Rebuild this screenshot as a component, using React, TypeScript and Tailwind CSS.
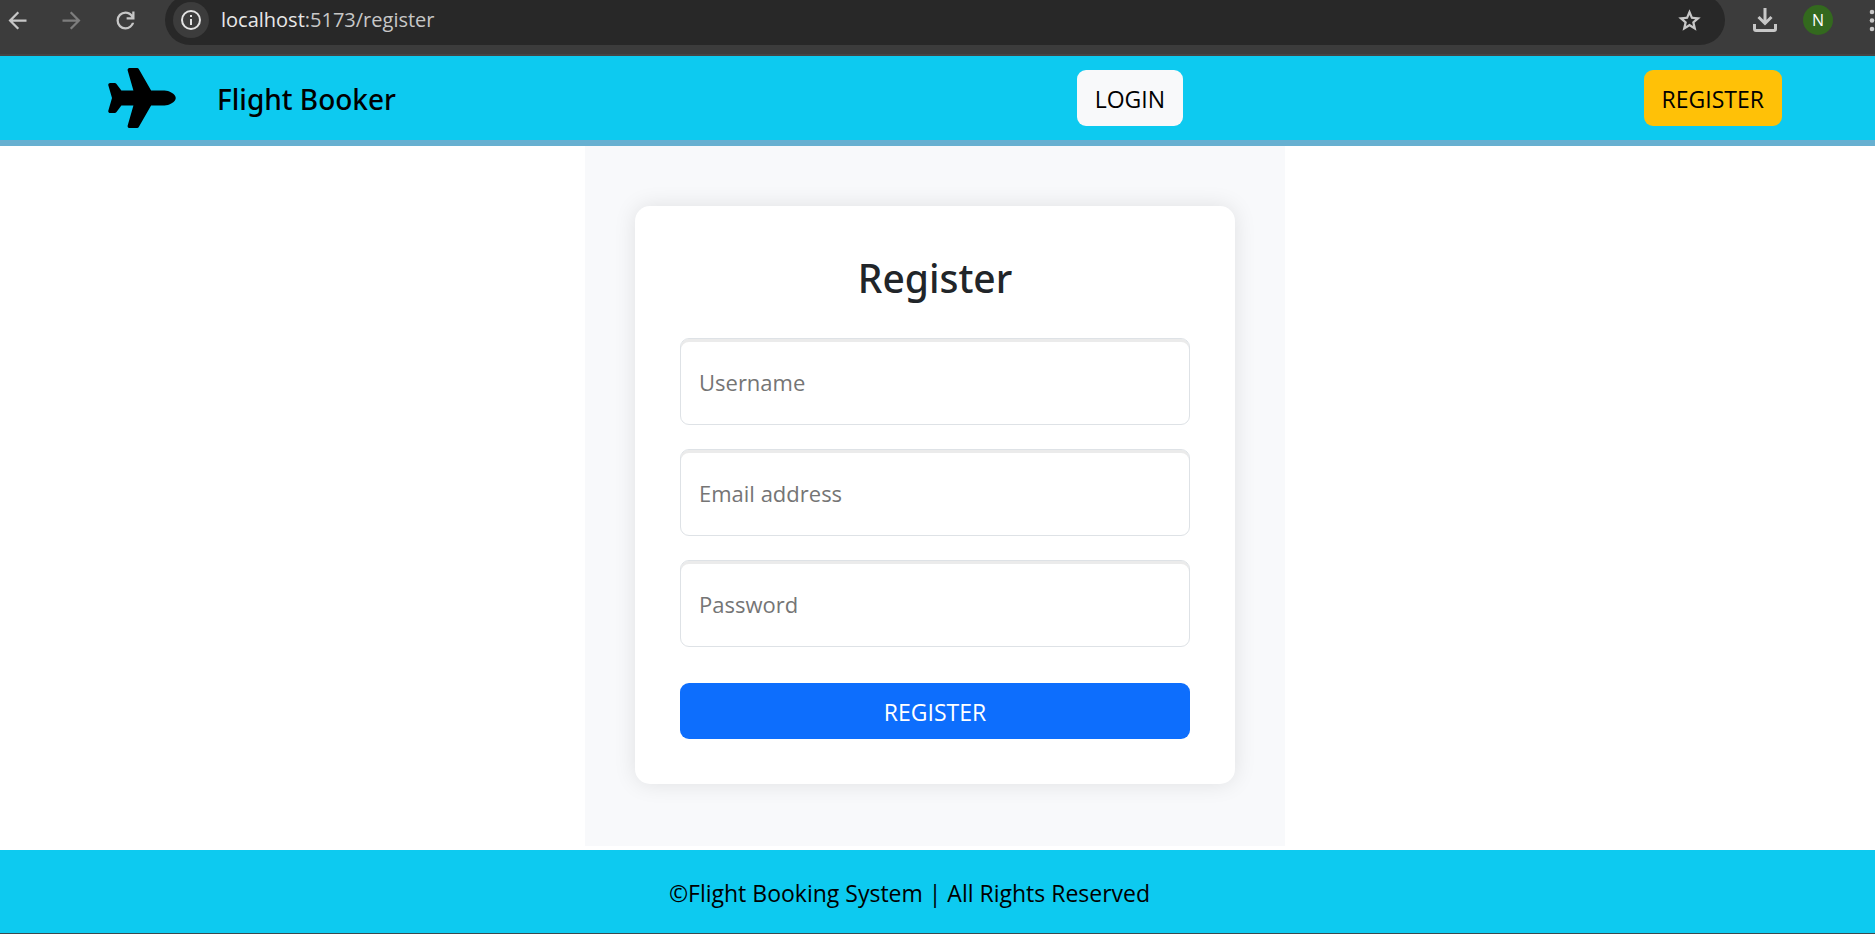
import React from "react";
import { FaPlane } from "react-icons/fa";

const paths = {
  back: "m313-440 224 224-57 56-320-320 320-320 57 56-224 224h487v80H313Z",
  reload:
    "M480-160q-134 0-227-93t-93-227q0-134 93-227t227-93q69 0 132 28.5T720-690v-110h80v280H520v-80h168q-32-56-87.5-88T480-720q-100 0-170 70t-70 170q0 100 70 170t170 70q77 0 139-44t87-116h84q-28 106-114 173t-196 67Z",
  star: "m354-287 126-76 126 77-33-144 111-96-146-13-58-136-58 135-146 13 111 97-33 143ZM233-120l65-281L80-590l288-25 112-265 112 265 288 25-218 189 65 281-247-149-247 149Z",
};

function Symbol({ d, className = "" }: { d: string; className?: string }) {
  return (
    <svg viewBox="0 -960 960 960" fill="currentColor" aria-hidden="true" className={`size-[27px] ${className}`}>
      <path d={d} />
    </svg>
  );
}

function BrowserBar() {
  return (
    <div className="h-14 overflow-hidden border-b-2 border-[#454545] bg-[#3c3c3c] text-[#c7c7c7]">
      <div className="flex h-10 items-center pl-1">
        <div className="flex shrink-0 gap-[27px]">
          <button type="button" aria-label="Back">
            <Symbol d={paths.back} />
          </button>
          <button type="button" aria-label="Forward" className="text-[#7d7d7d]">
            <Symbol d={paths.back} className="-scale-x-100" />
          </button>
          <button type="button" aria-label="Reload">
            <Symbol d={paths.reload} />
          </button>
        </div>
        <div className="ml-[26px] flex h-[50px] min-w-0 flex-1 shrink-0 items-center rounded-full bg-[#282828] pr-[18px] pl-2">
          <button
            type="button"
            aria-label="Site information"
            className="flex size-9 shrink-0 items-center justify-center rounded-full bg-[#3c3c3c] text-[#e3e3e3]"
          >
            <svg viewBox="0 0 20 20" fill="none" stroke="currentColor" strokeWidth="2" aria-hidden="true" className="size-5">
              <circle cx="10" cy="10" r="9" />
              <path d="M10 9v6M10 5v2" />
            </svg>
          </button>
          <p className="ml-3 flex-1 truncate text-[20px] leading-7">
            <span className="text-[#e8e8e8]">localhost</span>:5173/register
          </p>
          <button type="button" aria-label="Bookmark" className="mr-1">
            <Symbol d={paths.star} />
          </button>
        </div>
        <div className="-mr-[11px] ml-7 flex shrink-0 items-center">
          <button type="button" aria-label="Downloads">
            <svg viewBox="0 0 24 24" fill="none" stroke="currentColor" strokeWidth="3" aria-hidden="true" className="size-6">
              <path d="M12 0v15M5.500 9l6.500 6.500L18.500 9M1.500 16v5a1.500 1.500 0 0 0 1.500 1.500h18a1.500 1.500 0 0 0 1.500-1.500v-5" />
            </svg>
          </button>
          <button
            type="button"
            aria-label="Profile"
            className="ml-[26px] flex size-[30px] items-center justify-center rounded-full bg-[#33691e] text-[16px] leading-6 text-white"
          >
            N
          </button>
          <button type="button" aria-label="Menu" className="ml-[26px]">
            <svg viewBox="0 0 27 27" fill="currentColor" aria-hidden="true" className="size-[27px]">
              <circle cx="13" cy="5" r="2.300" />
              <circle cx="13" cy="13.500" r="2.300" />
              <circle cx="13" cy="22" r="2.300" />
            </svg>
          </button>
        </div>
      </div>
    </div>
  );
}

function Field({ label, type }: { label: string; type: string }) {
  return (
    <input
      type={type}
      aria-label={label}
      placeholder={label}
      className="block h-[87px] w-full rounded-[9px] border border-[#dee2e6] bg-white px-[18px] text-[22px] text-[#212529] shadow-[inset_0_3px_0_0_#ebebeb] outline-none placeholder:text-[#757575]"
    />
  );
}

export default function App() {
  return (
    <div className="flex min-h-screen flex-col bg-white font-['Open_Sans','Noto_Sans',sans-serif] text-[23px] leading-9 text-black">
      <BrowserBar />
      <header className="flex items-center justify-between border-b-6 border-[#67b0d1] bg-[#0dcaf0] py-3.5 pr-[93px] pl-[108px]">
        <a href="#home" className="flex min-w-0 basis-[508px] items-center">
          <FaPlane aria-hidden="true" className="-my-0.5 h-[60px] w-[68px] shrink-0" />
          <span className="ml-[41px] pt-0.5 font-['Noto_Sans',sans-serif] text-[28px] font-medium whitespace-nowrap">
            Flight Booker
          </span>
        </a>
        <a href="#login" className="rounded-[9px] bg-[#f8f9fa] px-[18px] pt-[11px] pb-[9px]">
          LOGIN
        </a>
        <a href="#register" className="rounded-[9px] bg-[#ffc107] px-[18px] pt-[11px] pb-[9px]">
          REGISTER
        </a>
      </header>
      <main className="mb-1 flex flex-1 justify-center pr-[5px]">
        <div className="w-full max-w-[700px] bg-[#f8f9fb] px-[50px] py-[60px]">
          <form
            className="rounded-[15px] bg-white p-[45px] shadow-[0_0_22px_rgba(0,0,0,0.1)]"
            onSubmit={(e) => e.preventDefault()}
          >
            <h1 className="mb-[33px] text-center font-['Noto_Sans',sans-serif] text-[39px] leading-[54px] font-medium text-[#212529]">
              Register
            </h1>
            <div className="flex flex-col gap-6">
              <Field label="Username" type="text" />
              <Field label="Email address" type="email" />
              <Field label="Password" type="password" />
            </div>
            <button type="submit" className="mt-9 block w-full rounded-[9px] bg-[#0d6efd] pt-[11px] pb-[9px] text-white">
              REGISTER
            </button>
          </form>
        </div>
      </main>
      <footer className="border-b border-[#3c4a4e] bg-[#0dcaf0] pt-[25px] pr-14 pb-[22px] text-center">
        <p>©Flight Booking System | All Rights Reserved</p>
      </footer>
    </div>
  );
}
